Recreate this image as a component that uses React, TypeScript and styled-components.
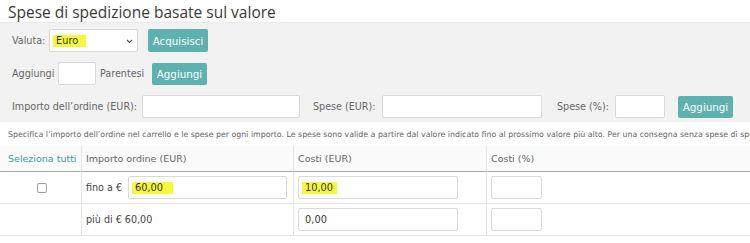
import React from "react";
import styled, { createGlobalStyle } from "styled-components";

const Global = createGlobalStyle`
  html, body { margin: 0; padding: 0; background: #fff; }
  body { font-family: "DejaVu Sans", Verdana, sans-serif; color: #555; overflow: hidden; }
`;

const Page = styled.div`
  width: 750px;
  height: 243px;
  overflow: hidden;
`;

const Title = styled.h1`
  margin: 0;
  height: 22px;
  padding-left: 8px;
  font-family: "Open Sans", "Liberation Sans", sans-serif;
  font-weight: 400;
  font-size: 15.5px;
  line-height: 24px;
  color: #3a3a3a;
  white-space: nowrap;
`;

const Panel = styled.div`
  background: #f2f2f2;
  border-top: 1px solid #e9e9e9;
  height: 100px;
  box-sizing: border-box;
  padding: 6px 0 0 12px;
  display: flex;
  flex-direction: column;
  gap: 10px;
`;

const FormRow = styled.div`
  display: flex;
  align-items: center;
  height: 23px;
`;

const Label = styled.span<{ $w: number; $ml?: number }>`
  flex: 0 0 ${(p) => p.$w}px;
  margin-left: ${(p) => p.$ml ?? 0}px;
  font-size: 9.6px;
  color: #666;
  white-space: nowrap;
`;

const Box = styled.div<{ $w: number; $ml?: number }>`
  position: relative;
  width: ${(p) => p.$w}px;
  height: 23px;
  box-sizing: border-box;
  background: #fff;
  border: 1px solid #d9d9d9;
  border-radius: 2px;
  margin-left: ${(p) => p.$ml ?? 0}px;
  display: flex;
  align-items: center;
  padding-left: 3px;
  font-size: 9.8px;
  color: #333;
  flex-shrink: 0;
`;

const Chevron = styled.svg`
  position: absolute;
  right: 4px;
  top: 9px;
`;

const Mark = styled.span<{ $w: number }>`
  display: inline-block;
  width: ${(p) => p.$w}px;
  height: 12px;
  line-height: 12px;
  background: #f8f83a;
  padding-left: 3px;
  box-sizing: border-box;
  color: #333;
`;

const Button = styled.button<{ $w: number; $h?: number; $ml?: number }>`
  width: ${(p) => p.$w}px;
  height: ${(p) => p.$h ?? 23}px;
  background: #5db1ae;
  color: #fff;
  border: none;
  border-radius: 2px;
  font-family: "DejaVu Sans", Verdana, sans-serif;
  font-size: 10.3px;
  padding: 0;
  margin-left: ${(p) => p.$ml ?? 0}px;
  flex-shrink: 0;
`;

const Description = styled.div`
  height: 24px;
  line-height: 25px;
  padding-left: 8px;
  font-size: 7.85px;
  color: #666;
  white-space: nowrap;
  overflow: hidden;
`;

const Grid = styled.div`
  display: grid;
  grid-template-columns: 82px 212px 193px 1fr;
`;

const HeadCell = styled.div<{ $accent?: boolean; $last?: boolean }>`
  height: 26px;
  box-sizing: border-box;
  border-right: ${(p) => (p.$last ? "none" : "1px solid #e6e6e6")};
  border-bottom: 1px solid #a8a8a8;
  background: #fafafa;
  display: flex;
  align-items: center;
  padding-left: ${(p) => (p.$accent ? 8 : 4)}px;
  font-size: 9.5px;
  color: ${(p) => (p.$accent ? "#3e9e9c" : "#666")};
  white-space: nowrap;
`;

const Cell = styled.div<{ $center?: boolean; $last?: boolean }>`
  height: 32px;
  box-sizing: border-box;
  border-right: ${(p) => (p.$last ? "none" : "1px solid #e6e6e6")};
  border-bottom: 1px solid #e6e6e6;
  display: flex;
  align-items: center;
  justify-content: ${(p) => (p.$center ? "center" : "flex-start")};
  padding-left: ${(p) => (p.$center ? 0 : 4)}px;
  font-size: 9.6px;
  color: #444;
  white-space: nowrap;
`;

const Check = styled.span`
  width: 8px;
  height: 8px;
  border: 1px solid #a0a0a0;
  border-radius: 2px;
  background: #fff;
  margin-left: 2px;
`;

const CellText = styled.span<{ $w: number }>`
  display: inline-block;
  width: ${(p) => p.$w}px;
`;

export default function App() {
  return (
    <Page>
      <Global />
      <Title>Spese di spedizione basate sul valore</Title>
      <Panel>
        <FormRow>
          <Label $w={37}>Valuta:</Label>
          <Box $w={89}>
            <Mark $w={33}>Euro</Mark>
            <Chevron width="7" height="5" viewBox="0 0 7 5">
              <path d="M1 1 L3.5 3.5 L6 1" fill="none" stroke="#555" strokeWidth="1.1" />
            </Chevron>
          </Box>
          <Button $w={60} $ml={10}>Acquisisci</Button>
        </FormRow>
        <FormRow>
          <Label $w={46}>Aggiungi</Label>
          <Box $w={38} />
          <Label $w={52} $ml={4}>Parentesi</Label>
          <Button $w={55} $h={22}>Aggiungi</Button>
        </FormRow>
        <FormRow>
          <Label $w={130}>Importo dell’ordine (EUR):</Label>
          <Box $w={158} />
          <Label $w={69} $ml={13}>Spese (EUR):</Label>
          <Box $w={160} />
          <Label $w={58} $ml={15}>Spese (%):</Label>
          <Box $w={50} />
          <Button $w={55} $h={22} $ml={13}>Aggiungi</Button>
        </FormRow>
      </Panel>
      <Description>
        Specifica l’importo dell’ordine nel carrello e le spese per ogni importo. Le spese sono valide a partire dal valore indicato fino al prossimo valore più alto. Per una consegna senza spese di spedizione inserisci 0,00.
      </Description>
      <Grid>
        <HeadCell $accent>Seleziona tutti</HeadCell>
        <HeadCell>Importo ordine (EUR)</HeadCell>
        <HeadCell>Costi (EUR)</HeadCell>
        <HeadCell $last>Costi (%)</HeadCell>

        <Cell $center><Check /></Cell>
        <Cell>
          <CellText $w={42}>fino a €</CellText>
          <Box $w={159}><Mark $w={41}>60,00</Mark></Box>
        </Cell>
        <Cell><Box $w={160}><Mark $w={35}>10,00</Mark></Box></Cell>
        <Cell $last><Box $w={51} /></Cell>

        <Cell $center />
        <Cell>più di € 60,00</Cell>
        <Cell><Box $w={160}>&nbsp;0,00</Box></Cell>
        <Cell $last><Box $w={51} /></Cell>
      </Grid>
    </Page>
  );
}
